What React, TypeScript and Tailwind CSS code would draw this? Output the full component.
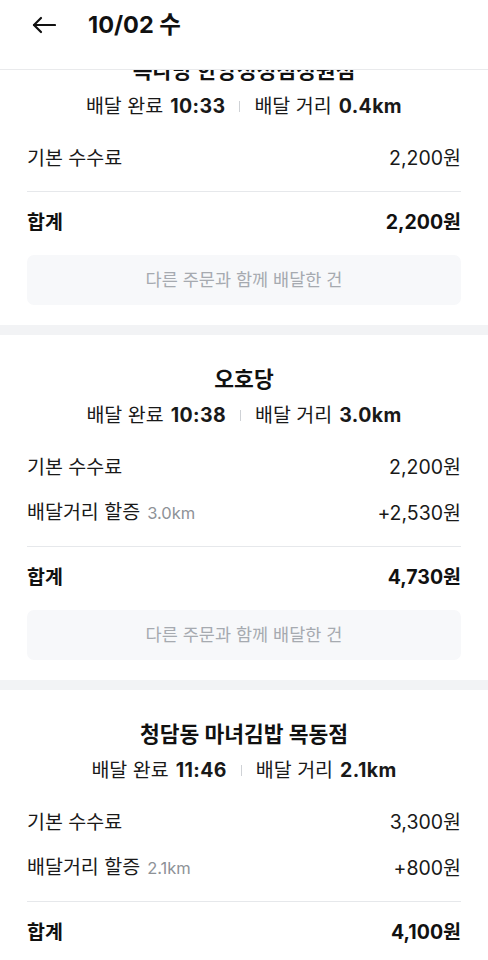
import React from "react";

type Row = { label: string; sub?: string; value: string };
type Order = { name: string; time: string; dist: string; rows: Row[]; total: string };

const orders: Order[] = [
  {
    name: "목다방 한양정성점정원점",
    time: "10:33",
    dist: "0.4km",
    rows: [{ label: "기본 수수료", value: "2,200원" }],
    total: "2,200원",
  },
  {
    name: "오호당",
    time: "10:38",
    dist: "3.0km",
    rows: [
      { label: "기본 수수료", value: "2,200원" },
      { label: "배달거리 할증", sub: "3.0km", value: "+2,530원" },
    ],
    total: "4,730원",
  },
  {
    name: "청담동 마녀김밥 목동점",
    time: "11:46",
    dist: "2.1km",
    rows: [
      { label: "기본 수수료", value: "3,300원" },
      { label: "배달거리 할증", sub: "2.1km", value: "+800원" },
    ],
    total: "4,100원",
  },
];

function Section({ o, first }: { o: Order; first?: boolean }) {
  return (
    <div className={first ? "mt-[-44px]" : ""}>
      <div className="px-[27px] pt-[30px] pb-[20px]">
        <div className="text-center text-[21.5px] leading-[28px] font-bold text-[#111]">{o.name}</div>
        <div className="mt-[9px] flex items-center justify-center text-[19.5px] leading-[26px] text-[#191919]">
          <span>배달 완료</span>
          <span className="ml-[7px] font-bold tracking-[0.4px]">{o.time}</span>
          <span className="mx-[14px] inline-block h-[11px] w-px bg-[#cfd2d6]" />
          <span>배달 거리</span>
          <span className="ml-[7px] font-bold tracking-[0.4px]">{o.dist}</span>
        </div>
        <div className="mt-[26px] flex flex-col gap-[19px]">
          {o.rows.map((r, i) => (
            <div key={i} className="flex items-center justify-between text-[19.5px] leading-[26px] text-[#191919]">
              <span>
                {r.label}
                {r.sub && <span className="ml-[7px] text-[16.5px] text-[#8e9297]">{r.sub}</span>}
              </span>
              <span>{r.value}</span>
            </div>
          ))}
        </div>
        <div className="mt-[20px] h-px bg-[#e6e8eb]" />
        <div className="mt-[17px] flex items-center justify-between text-[19.5px] leading-[26px] font-bold text-[#111]">
          <span>합계</span>
          <span>{o.total}</span>
        </div>
        <div className="mt-[20px] flex h-[50px] items-center justify-center rounded-[7px] bg-[#f7f8fa] text-[17.5px] text-[#a6aab0]">
          다른 주문과 함께 배달한 건
        </div>
      </div>
      <div className="h-[10px] bg-[#f2f3f5]" />
    </div>
  );
}

export default function App() {
  return (
    <div
      className="flex h-[960px] w-[488px] flex-col overflow-hidden bg-white"
      style={{ fontFamily: "Inter, 'Noto Sans CJK KR', sans-serif" }}
    >
      <div className="relative z-10 h-[70px] shrink-0 border-b border-[#e9eaec] bg-white">
        <div className="flex h-[50px] items-center pl-[32px]">
          <svg width="24" height="18" viewBox="0 0 24 18" fill="none" stroke="#111" strokeWidth="2.2" strokeLinecap="round" strokeLinejoin="round">
            <path d="M23 9H2" />
            <path d="M9 2L2 9L9 16" />
          </svg>
          <span className="ml-[32px] text-[23.5px] font-bold text-[#111]">10/02 수</span>
        </div>
      </div>
      <div className="flex-1 overflow-hidden">
        {orders.map((o, i) => (
          <Section key={i} o={o} first={i === 0} />
        ))}
      </div>
    </div>
  );
}
